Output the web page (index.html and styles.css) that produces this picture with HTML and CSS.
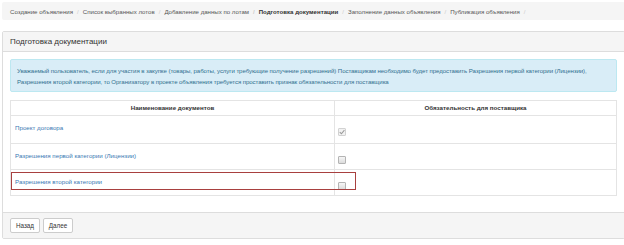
FILE: index.html
```html
<!DOCTYPE html>
<html lang="ru">
<head>
  <meta charset="UTF-8" />
  <title>Подготовка документации</title>
  <link rel="stylesheet" href="styles.css">
</head>
<body>
  <div class="page">
    <ol class="breadcrumb">
      <li>Создание объявления</li>
      <li>Список выбранных лотов</li>
      <li>Добавление данных по лотам</li>
      <li class="active">Подготовка документации</li>
      <li>Заполнение данных объявления</li>
      <li>Публикация объявления</li>
      <li></li>
    </ol>

    <div class="panel">
      <div class="panel-heading">Подготовка документации</div>
      <div class="panel-body">
        <div class="alert">
          Уважаемый пользователь, если для участия в закупке (товары, работы, услуги требующие получение разрешений) Поставщикам необходимо будет предоставить Разрешения первой категории (Лицензии), Разрешения второй категории, то Организатору в проекте объявления требуется проставить признак обязательности для поставщика
        </div>

        <div class="table-wrap">
          <table class="docs">
            <thead>
              <tr>
                <th class="col-name">Наименование документов</th>
                <th>Обязательность для поставщика</th>
              </tr>
            </thead>
            <tbody>
              <tr class="row-first">
                <td><a href="#">Проект договора</a></td>
                <td>
                  <span class="cb checked">
                    <svg viewBox="0 0 7 7" width="7" height="7"><path d="M1.5 3.6 L3 5 L5.6 1.8" fill="none" stroke="#9a9a9a" stroke-width="0.9"/></svg>
                  </span>
                </td>
              </tr>
              <tr>
                <td><a href="#">Разрешения первой категории (Лицензии)</a></td>
                <td><span class="cb"></span></td>
              </tr>
              <tr>
                <td><a href="#">Разрешения второй категории</a></td>
                <td><span class="cb"></span></td>
              </tr>
            </tbody>
          </table>
          <div class="highlight"></div>
        </div>
      </div>
      <div class="panel-footer">
        <button class="btn">Назад</button>
        <button class="btn">Далее</button>
      </div>
    </div>
  </div>
</body>
</html>
```

FILE: styles.css
```css
body {
  margin: 0;
  padding: 2px 0 0 2px;
  overflow: hidden;
  background: #fff;
  font-family: 'Liberation Sans', Arial, sans-serif;
  color: #333;
}

.page {
  width: 623px;
}

.breadcrumb {
  list-style: none;
  margin: 0;
  padding: 0 8px;
  height: 18px;
  display: flex;
  align-items: center;
  background: #f5f5f5;
  border-radius: 2px;
  font-size: 6.1px;
  color: #555;
}

.breadcrumb li + li:before {
  content: "/";
  color: #ccc;
  padding: 0 4px 0 4px;
}

.breadcrumb .active {
  font-weight: bold;
  color: #333;
}

.panel {
  margin-top: 11px;
  border: 1px solid #ddd;
  border-radius: 2px;
  background: #fff;
}

.panel-heading {
  height: 19px;
  line-height: 19px;
  padding: 0 7px;
  background: #f5f5f5;
  border-bottom: 1px solid #ddd;
  font-size: 8px;
  color: #333;
}

.panel-body {
  padding: 7px 7px 16px 7px;
}

.alert {
  padding: 5px 4px 4px 6px;
  background: #d9edf7;
  border: 1px solid #bce8f1;
  border-radius: 2px;
  color: #31708f;
  font-size: 6.1px;
  letter-spacing: -0.08px;
  line-height: 11px;
}

.table-wrap {
  position: relative;
  margin-top: 8px;
}

.docs {
  width: 100%;
  border-collapse: collapse;
  font-size: 6.2px;
}

.docs th,
.docs td {
  border: 1px solid #e4e4e4;
  padding: 0 4px;
  text-align: left;
  vertical-align: top;
}

.docs th {
  height: 14px;
  line-height: 14px;
  text-align: center;
  color: #333;
  font-weight: bold;
}

.docs th.col-name {
  width: 315px;
}

.docs td {
  height: 26px;
  padding-top: 7px;
  line-height: 9px;
  box-sizing: border-box;
}

.docs .row-first td {
  height: 28px;
}

.docs a {
  color: #3b79b3;
  text-decoration: none;
}

.cb {
  display: block;
  width: 6px;
  height: 6px;
  margin: 5px 0 0 -1px;
  border: 1px solid #b4b4b4;
  border-radius: 1px;
  background: linear-gradient(#f6f6f6, #dcdcdc);
}

.cb.checked {
  border-color: #d2d2d2;
  background: #f2f2f2;
}

.cb svg {
  display: block;
  margin: -1px 0 0 -1px;
  width: 8px;
  height: 8px;
}

.highlight {
  position: absolute;
  left: 1px;
  top: 72px;
  width: 343px;
  height: 16px;
  border: 1.5px solid #a8403f;
}

.panel-footer {
  padding: 5px 7px 5px 7px;
  background: #f5f5f5;
  border-top: 1px solid #ddd;
  display: flex;
  gap: 3px;
}

.btn {
  width: 30px;
  height: 15px;
  padding: 0;
  background: #fff;
  border: 1px solid #ccc;
  border-radius: 2px;
  font-family: 'Liberation Sans', Arial, sans-serif;
  font-size: 6.3px;
  color: #333;
}
```
